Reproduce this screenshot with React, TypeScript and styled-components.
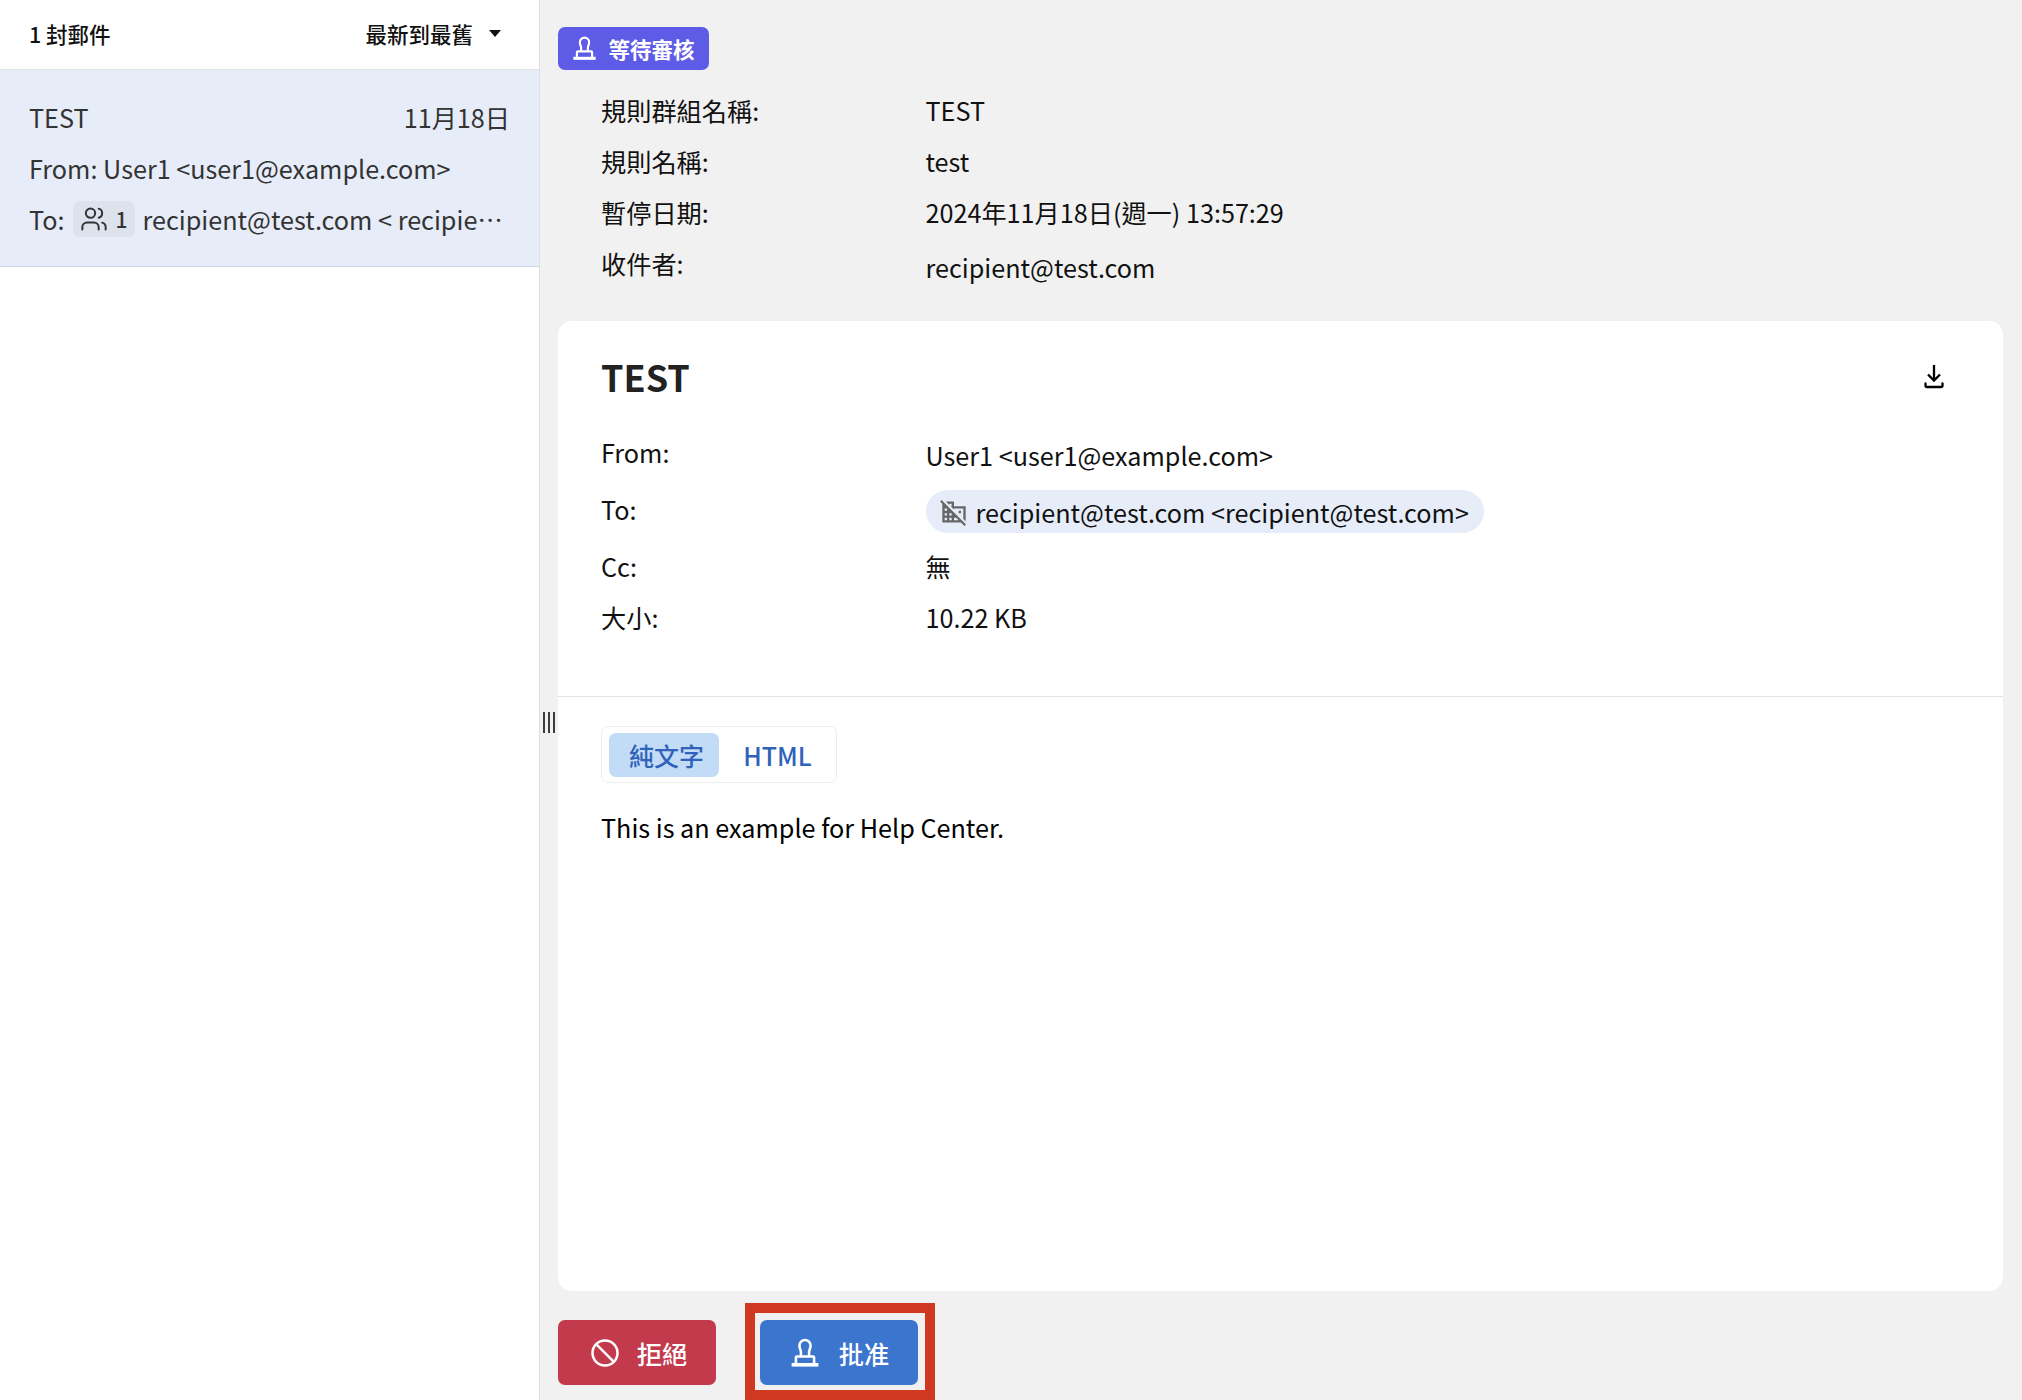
import React from 'react';
import styled, { createGlobalStyle } from 'styled-components';
import { Ban, Users } from 'lucide-react';
import { MdDomainDisabled } from 'react-icons/md';

const GlobalStyle = createGlobalStyle`
  html, body {
    margin: 0;
    padding: 0;
    background: #fff;
  }
  * {
    box-sizing: border-box;
  }
  body {
    font-family: "Noto Sans CJK TC", "Noto Sans", sans-serif;
    color: #000;
  }
`;

const Page = styled.div`
  display: flex;
  width: 2022px;
  height: 1400px;
  overflow: hidden;
`;

const Sidebar = styled.aside`
  width: 540px;
  flex-shrink: 0;
  background: #fff;
  border-right: 1px solid #dfdfdf;
`;

const ListHeader = styled.div`
  display: flex;
  align-items: center;
  justify-content: space-between;
  height: 70px;
  padding: 0 38px 2px 29px;
  border-bottom: 1px solid #dfe1e4;
  font-size: 21.5px;
  font-weight: 500;
  color: #111;
`;

const Sort = styled.div`
  display: flex;
  align-items: center;
  gap: 16px;
`;

const Caret = styled.span`
  width: 0;
  height: 0;
  border-left: 6px solid transparent;
  border-right: 6px solid transparent;
  border-top: 7px solid #111;
`;

const MailRow = styled.div`
  display: flex;
  flex-direction: column;
  height: 197px;
  padding: 21px 29px 0 29px;
  background: #e6ecf8;
  border-bottom: 1px solid #cdd3df;
  font-size: 25.2px;
  color: #333;
`;

const MailLine = styled.div`
  display: flex;
  align-items: center;
  justify-content: space-between;
  height: 51px;
  white-space: nowrap;
`;

const ToLine = styled(MailLine)`
  justify-content: flex-start;
  gap: 8px;
  padding-right: 2px;
`;

const CountChip = styled.span`
  display: flex;
  align-items: center;
  justify-content: center;
  gap: 8px;
  width: 62px;
  height: 36px;
  flex-shrink: 0;
  border-radius: 7px;
  background: #dde3ed;
  font-size: 21px;
  font-weight: 500;
`;

const Truncated = styled.span`
  overflow: hidden;
  text-overflow: ellipsis;
  min-width: 0;
`;

const Resizer = styled.div`
  width: 18px;
  flex-shrink: 0;
  padding: 712px 0 0 3px;
  background: #f1f1f1;
`;

const Grip = styled.div`
  display: flex;
  gap: 3px;
  height: 21px;
  span {
    width: 2px;
    background: #3c3c3c;
  }
`;

const Main = styled.main`
  flex: 1;
  display: flex;
  flex-direction: column;
  padding: 27px 19px 0 0;
  background: #f1f1f1;
  min-width: 0;
`;

const StatusBadge = styled.div`
  display: flex;
  align-items: center;
  justify-content: center;
  gap: 11px;
  width: 151px;
  height: 43px;
  border-radius: 7px;
  background: #5e5ce6;
  color: #fff;
  font-size: 21.5px;
  font-weight: 700;
`;

const MetaList = styled.div`
  display: flex;
  flex-direction: column;
  padding: 22px 0 0 43px;
  height: 251px;
`;

const InfoRow = styled.div<{ $h?: number }>`
  display: flex;
  font-size: 25.2px;
  height: ${p => p.$h || 51}px;
  line-height: 36px;
`;

const Label = styled.div`
  width: 324.5px;
  flex-shrink: 0;
  color: #111;
`;

const Value = styled.div<{ $shift?: number }>`
  padding-top: ${p => p.$shift || 0}px;
  color: #111;
`;

const Card = styled.section`
  display: flex;
  flex-direction: column;
  height: 970px;
  border-radius: 14px;
  background: #fff;
`;

const CardHead = styled.div`
  height: 376px;
  padding: 29px 43px 0;
  border-bottom: 1px solid #e3e3e3;
`;

const TitleBar = styled.div`
  display: flex;
  align-items: center;
  justify-content: space-between;
  height: 52px;
  margin-bottom: 32px;
`;

const Title = styled.h1`
  margin: 0;
  font-size: 36px;
  font-weight: 700;
  color: #222;
`;

const DownloadIcon = styled.svg`
  width: 20px;
  height: 25px;
  margin-right: 16px;
`;

const RecipientChip = styled.span`
  display: inline-flex;
  align-items: center;
  gap: 8px;
  height: 43px;
  padding: 0 15px 0 14px;
  border-radius: 22px;
  background: #e6ecf8;
  white-space: nowrap;
  margin-top: -1px;
  svg {
    color: #666;
  }
`;

const CardBody = styled.div`
  padding: 29px 43px 0;
`;

const TabBox = styled.div`
  display: inline-flex;
  align-items: center;
  height: 57px;
  padding: 0 5px 0 7px;
  border: 1px solid #eeeeee;
  border-radius: 7px;
`;

const Tab = styled.span<{ $active?: boolean }>`
  display: flex;
  align-items: center;
  justify-content: center;
  width: ${p => (p.$active ? 110 : 112)}px;
  height: 44px;
  padding-left: 5px;
  border-radius: 7px;
  background: ${p => (p.$active ? '#c2dcf7' : 'transparent')};
  color: #2f62b8;
  font-size: 25px;
  font-weight: 500;
`;

const BodyText = styled.p`
  margin: 26px 0 0;
  font-size: 25.2px;
  line-height: 36px;
  color: #000;
`;

const Actions = styled.div`
  display: flex;
  gap: 44px;
  margin-top: 29px;
`;

const ActionWrap = styled.div`
  position: relative;
`;

const ActionButton = styled.button<{ $tone: string; $gap: number; $pad: number }>`
  display: flex;
  align-items: center;
  justify-content: center;
  gap: ${p => p.$gap}px;
  width: 158px;
  height: 65px;
  padding: 0 0 0 ${p => p.$pad}px;
  border: 0;
  border-radius: 7px;
  background: ${p => p.$tone};
  color: #fff;
  font-family: inherit;
  font-size: 25.2px;
  font-weight: 500;
`;

const Highlight = styled.div`
  position: absolute;
  left: -15px;
  top: -17px;
  width: 190px;
  height: 97px;
  border: 10px solid #d0391f;
  pointer-events: none;
`;

const StampIcon = ({ size }: { size: number }) => (
  <svg width={size} height={size} viewBox="0 0 28 28" fill="none" stroke="currentColor" strokeWidth="2.4">
    <path d="M10.2 17.200V13c0-2-1.400-3-1.400-6a5.200 5.200 0 0 1 10.400 0c0 3-1.400 4-1.400 6v4.200" />
    <path d="M5.500 24V18.200a1 1 0 0 1 1-1h15a1 1 0 0 1 1 1V24" />
    <path d="M1.500 25h25" strokeWidth="3.400" />
  </svg>
);

export default function App() {
  return (
    <Page lang="zh-TW">
      <GlobalStyle />
      <Sidebar>
        <ListHeader>
          <span>1 封郵件</span>
          <Sort>
            <span>最新到最舊</span>
            <Caret />
          </Sort>
        </ListHeader>
        <MailRow>
          <MailLine>
            <span>TEST</span>
            <span>11月18日</span>
          </MailLine>
          <MailLine>From: User1 &lt;user1@example.com&gt;</MailLine>
          <ToLine>
            <span>To:</span>
            <CountChip>
              <Users size={28} strokeWidth={1.7} />
              1
            </CountChip>
            <Truncated>recipient@test.com &lt; recipient@test.com &gt;</Truncated>
          </ToLine>
        </MailRow>
      </Sidebar>
      <Resizer>
        <Grip>
          <span />
          <span />
          <span />
        </Grip>
      </Resizer>
      <Main>
        <StatusBadge>
          <StampIcon size={25} />
          等待審核
        </StatusBadge>
        <MetaList>
          <InfoRow>
            <Label>規則群組名稱:</Label>
            <Value>TEST</Value>
          </InfoRow>
          <InfoRow>
            <Label>規則名稱:</Label>
            <Value>test</Value>
          </InfoRow>
          <InfoRow>
            <Label>暫停日期:</Label>
            <Value>2024年11月18日(週一) 13:57:29</Value>
          </InfoRow>
          <InfoRow>
            <Label>收件者:</Label>
            <Value $shift={4}>recipient@test.com</Value>
          </InfoRow>
        </MetaList>
        <Card>
          <CardHead>
            <TitleBar>
              <Title>TEST</Title>
              <DownloadIcon viewBox="0 0 20 25" fill="none" stroke="currentColor" strokeWidth="2.3">
                <path d="M10 1v15" />
                <path d="M4 10.500l6 6 6-6" />
                <path d="M1.500 19.500v2a1.500 1.500 0 0 0 1.500 1.500h14a1.500 1.500 0 0 0 1.500-1.500v-2" strokeLinecap="round" />
              </DownloadIcon>
            </TitleBar>
            <InfoRow $h={57}>
              <Label>From:</Label>
              <Value $shift={3}>User1 &lt;user1@example.com&gt;</Value>
            </InfoRow>
            <InfoRow $h={57}>
              <Label>To:</Label>
              <Value>
                <RecipientChip>
                  <MdDomainDisabled size={28} />
                  recipient@test.com &lt;recipient@test.com&gt;
                </RecipientChip>
              </Value>
            </InfoRow>
            <InfoRow $h={51}>
              <Label>Cc:</Label>
              <Value>無</Value>
            </InfoRow>
            <InfoRow $h={51}>
              <Label>大小:</Label>
              <Value>10.22 KB</Value>
            </InfoRow>
          </CardHead>
          <CardBody>
            <TabBox>
              <Tab $active>純文字</Tab>
              <Tab>HTML</Tab>
            </TabBox>
            <BodyText>This is an example for Help Center.</BodyText>
          </CardBody>
        </Card>
        <Actions>
          <ActionButton $tone="#c43a4d" $gap={17} $pad={3}>
            <Ban size={30} strokeWidth={2} />
            拒絕
          </ActionButton>
          <ActionWrap>
            <ActionButton $tone="#3b75ce" $gap={19} $pad={1}>
              <StampIcon size={30} />
              批准
            </ActionButton>
            <Highlight />
          </ActionWrap>
        </Actions>
      </Main>
    </Page>
  );
}
